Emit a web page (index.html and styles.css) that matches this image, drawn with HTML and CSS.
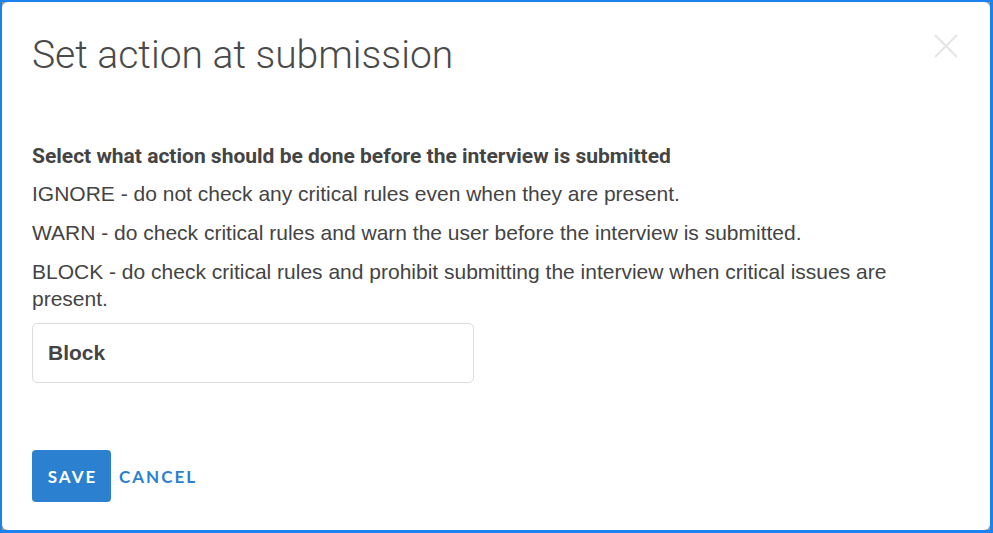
FILE: index.html
```html
<!DOCTYPE html>
<html>
<head>
<meta charset="utf-8">
<link rel="stylesheet" href="styles.css">
</head>
<body>
<div class="frame">
  <div class="dialog">
    <div class="header">
      <h1 class="title">Set action at submission</h1>
      <button class="close" aria-label="Close">
        <svg width="24" height="24" viewBox="0 0 24 24"><path d="M1 1L23 23M23 1L1 23" stroke="#e6e6e6" stroke-width="2.2" fill="none"/></svg>
      </button>
    </div>
    <div class="body">
      <p class="lead">Select what action should be done before the interview is submitted</p>
      <p class="text">IGNORE - do not check any critical rules even when they are present.</p>
      <p class="text">WARN - do check critical rules and warn the user before the interview is submitted.</p>
      <p class="text last">BLOCK - do check critical rules and prohibit submitting the interview when critical issues are present.</p>
      <div class="select">Block</div>
    </div>
    <div class="footer">
      <button class="btn-primary">SAVE</button>
      <button class="btn-link">CANCEL</button>
    </div>
  </div>
</div>
</body>
</html>
```

FILE: styles.css
```css
* { box-sizing: border-box; }
html, body { margin: 0; padding: 0; }
body { width: 993px; height: 533px; background: #1b82ef; }
.frame {
  width: 993px;
  height: 533px;
  border: 2px solid #1b82ef;
  border-right-width: 3px;
  border-bottom-width: 3px;
  background: #9a9a9a;
}
.dialog {
  width: 100%;
  height: 100%;
  background: #fff;
  border-radius: 6px;
  padding: 0 30px;
}
.header {
  display: flex;
  justify-content: space-between;
  align-items: flex-start;
  padding-top: 30px;
}
.title {
  margin: 0;
  font-family: Roboto, sans-serif;
  font-weight: 300;
  font-size: 39px;
  line-height: 46px;
  color: #4a4a4a;
}
.close {
  border: 0;
  background: none;
  padding: 0;
  margin: 2px 2px 0 0;
  width: 24px;
  height: 24px;
  display: flex;
}
.body { padding-top: 65px; }
.lead {
  margin: 0 0 10px;
  font-family: Roboto, sans-serif;
  font-weight: 700;
  font-size: 21px;
  line-height: 27px;
  color: #444;
}
.text {
  margin: 0 0 12px;
  font-family: "Liberation Sans", Arial, sans-serif;
  font-size: 21px;
  line-height: 27px;
  color: #444;
}
.text.last { margin-bottom: 11px; }
.select {
  width: 442px;
  height: 60px;
  border: 1px solid #ddd;
  border-radius: 5px;
  padding: 0 15px;
  display: flex;
  align-items: center;
  font-family: "Liberation Sans", Arial, sans-serif;
  font-weight: 700;
  font-size: 21px;
  color: #444;
}
.footer {
  display: flex;
  align-items: center;
  gap: 8px;
  margin-top: 67px;
}
.btn-primary {
  width: 79px;
  height: 52px;
  border: 0;
  border-radius: 4px;
  background: #2b80cf;
  color: #fff;
  font-family: Lato, sans-serif;
  font-weight: 700;
  font-size: 17px;
  letter-spacing: 2px;
  padding: 0 0 0 2px;
}
.btn-link {
  border: 0;
  background: none;
  padding: 0;
  color: #2b80cf;
  font-family: Lato, sans-serif;
  font-weight: 700;
  font-size: 17px;
  letter-spacing: 2px;
}
```
